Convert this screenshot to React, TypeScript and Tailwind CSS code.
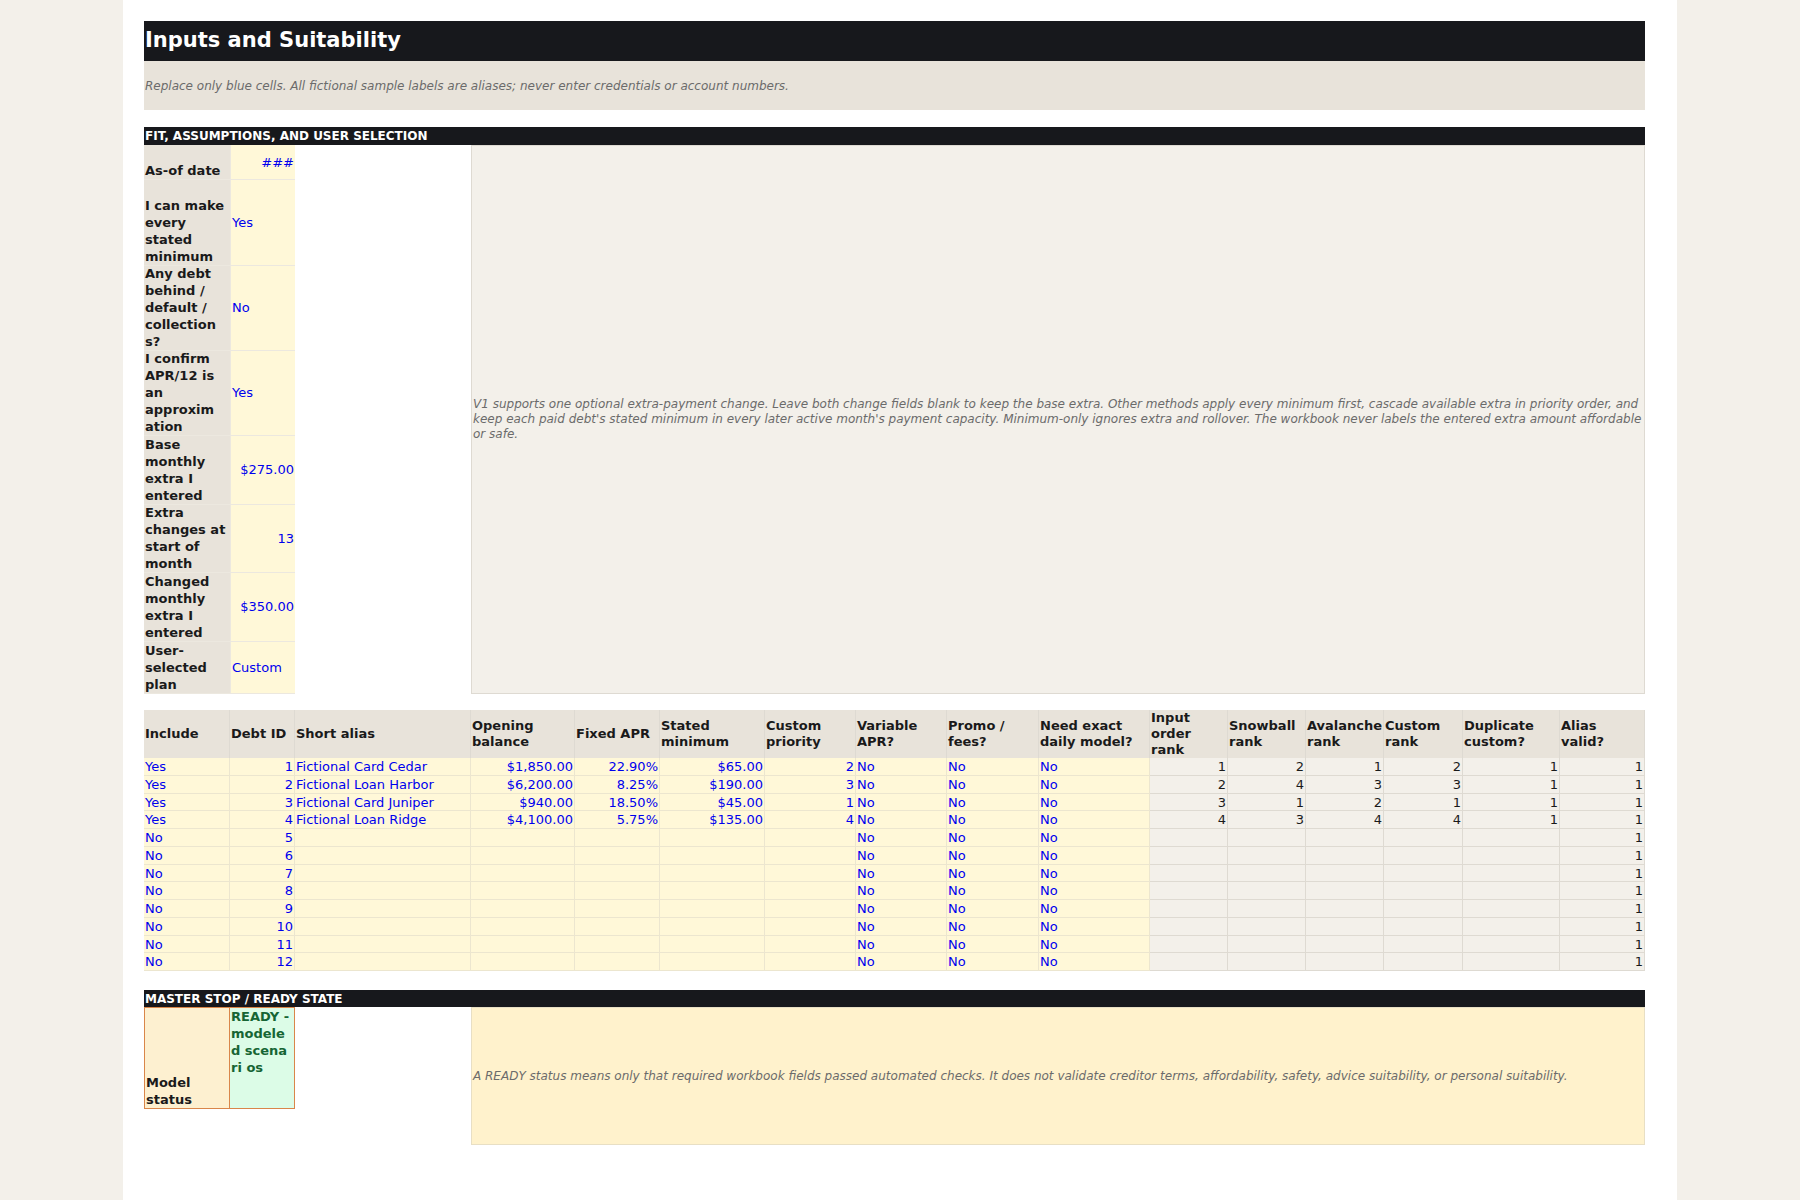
import React from "react";

const F = { fontFamily: '"DejaVu Sans", sans-serif' };

const fit: [string, string, boolean, string][] = [
  ["As-of date", "###", true, "h-[35px]"],
  ["I can make every stated minimum", "Yes", false, "h-[86px]"],
  ["Any debt behind / default / collection s?", "No", false, "h-[85px]"],
  ["I confirm APR/12 is an approxim ation", "Yes", false, "h-[85px]"],
  ["Base monthly extra I entered", "$275.00", true, "h-[69px]"],
  ["Extra changes at start of month", "13", true, "h-[68px]"],
  ["Changed monthly extra I entered", "$350.00", true, "h-[69px]"],
  ["User-selected plan", "Custom", false, "h-[52px]"],
];

const heads = ["Include","Debt ID","Short alias","Opening balance","Fixed APR","Stated minimum","Custom priority","Variable APR?","Promo / fees?","Need exact daily model?","Input order rank","Snowball rank","Avalanche rank","Custom rank","Duplicate custom?","Alias valid?"];

const debts = [
  ["Fictional Card Cedar","$1,850.00","22.90%","$65.00","2",[1,2,1,2,1]],
  ["Fictional Loan Harbor","$6,200.00","8.25%","$190.00","3",[2,4,3,3,1]],
  ["Fictional Card Juniper","$940.00","18.50%","$45.00","1",[3,1,2,1,1]],
  ["Fictional Loan Ridge","$4,100.00","5.75%","$135.00","4",[4,3,4,4,1]],
] as const;

const cols = "grid-cols-[86px_65px_176px_104px_85px_105px_91px_91px_92px_111px_78px_78px_78px_79px_97px_85px]";

export default function App() {
  const rows = Array.from({ length: 12 }, (_, i) => i);
  return (
    <div style={F} className="min-h-[1200px] bg-[#f3f0ea] text-[13px] text-[#1a1a1a]">
      <div className="mx-[123px] min-h-[1200px] bg-white pt-[21px] pl-[21px] pr-[31px]">
        <div className="w-[1501px]">
          <div className="h-[40px] bg-[#17181c] text-white text-[21px] font-bold flex items-center px-[1px]">Inputs and Suitability</div>
          <div className="h-[49px] bg-[#e8e3da] flex items-center italic text-[12px] text-[#6b6b6b] px-[1px]">
            Replace only blue cells. All fictional sample labels are aliases; never enter credentials or account numbers.
          </div>
          <div className="mt-[17px] h-[18px] bg-[#17181c] text-white text-[12px] font-bold flex items-center px-[1px]">FIT, ASSUMPTIONS, AND USER SELECTION</div>
          <div className="flex">
            <div className="w-[151px]">
              {fit.map(([l, v, right, h], i) => (
                <div key={i} className={`flex ${h} border-b border-[#ece8df]`}>
                  <div className="w-[86px] bg-[#e8e3da] font-bold leading-[17px] flex items-end px-[1px]">{l}</div>
                  <div className={`w-[65px] bg-[#fff8d8] text-[#0000ee] flex px-[1px] ${i === 0 ? "items-start justify-end pt-[8px]" : "items-center"} ${right && i > 0 ? "justify-end" : ""} border-l border-[#ece8df]`}>{v}</div>
                </div>
              ))}
            </div>
            <div className="w-[176px]" />
            <div className="flex-1 bg-[#f3f0ea] border border-[#dedad2] flex items-center italic text-[12px] text-[#6b6b6b] leading-[15px] px-[1px]">
              V1 supports one optional extra-payment change. Leave both change fields blank to keep the base extra. Other methods apply every minimum first, cascade available extra in priority order, and keep each paid debt's stated minimum in every later active month's payment capacity. Minimum-only ignores extra and rollover. The workbook never labels the entered extra amount affordable or safe.
            </div>
          </div>

          <div className="mt-[16px]">
            <div className={`grid ${cols} h-[48px] bg-[#e8e3da] font-bold leading-[16px]`}>
              {heads.map((h) => (
                <div key={h} className="flex items-center px-[1px] border-r border-[#dedad2]">{h}</div>
              ))}
            </div>
            {rows.map((i) => {
              const d = debts[i];
              const inc = "bg-[#fff8d8] text-[#0000ee] border-r border-b border-[#ece6cf] px-[1px] h-[17.75px] leading-[17px] overflow-hidden";
              const calc = "bg-[#f3f0ea] border-r border-b border-[#dedad2] px-[1px] h-[17.75px] leading-[17px] text-right";
              return (
                <div key={i} className={`grid ${cols}`}>
                  <div className={inc}>{d ? "Yes" : "No"}</div>
                  <div className={`${inc} text-right`}>{i + 1}</div>
                  <div className={inc}>{d ? d[0] : ""}</div>
                  <div className={`${inc} text-right`}>{d ? d[1] : ""}</div>
                  <div className={`${inc} text-right`}>{d ? d[2] : ""}</div>
                  <div className={`${inc} text-right`}>{d ? d[3] : ""}</div>
                  <div className={`${inc} text-right`}>{d ? d[4] : ""}</div>
                  <div className={inc}>No</div>
                  <div className={inc}>No</div>
                  <div className={inc}>No</div>
                  {[0, 1, 2, 3, 4].map((k) => (
                    <div key={k} className={calc}>{d ? d[5][k] : ""}</div>
                  ))}
                  <div className={calc}>1</div>
                </div>
              );
            })}
          </div>

          <div className="mt-[19px] h-[17px] bg-[#17181c] text-white text-[12px] font-bold flex items-center px-[1px]">MASTER STOP / READY STATE</div>
          <div className="flex">
            <div className="flex h-[102px] w-[151px] border border-[#d9864a]">
              <div className="w-[85px] bg-[#fdf0d0] font-bold leading-[17px] flex items-end px-[1px] border-r border-[#d9864a]">Model status</div>
              <div className="flex-1 bg-[#dcfce7] text-[#166534] font-bold leading-[17px] px-[1px] break-all">READY - modele d scenari os</div>
            </div>
            <div className="w-[176px]" />
            <div className="flex-1 h-[138px] bg-[#fff2cc] border border-[#e8dfc4] flex items-center italic text-[12px] text-[#6b6b6b] leading-[15px] px-[1px]">
              A READY status means only that required workbook fields passed automated checks. It does not validate creditor terms, affordability, safety, advice suitability, or personal suitability.
            </div>
          </div>
        </div>
      </div>
    </div>
  );
}
